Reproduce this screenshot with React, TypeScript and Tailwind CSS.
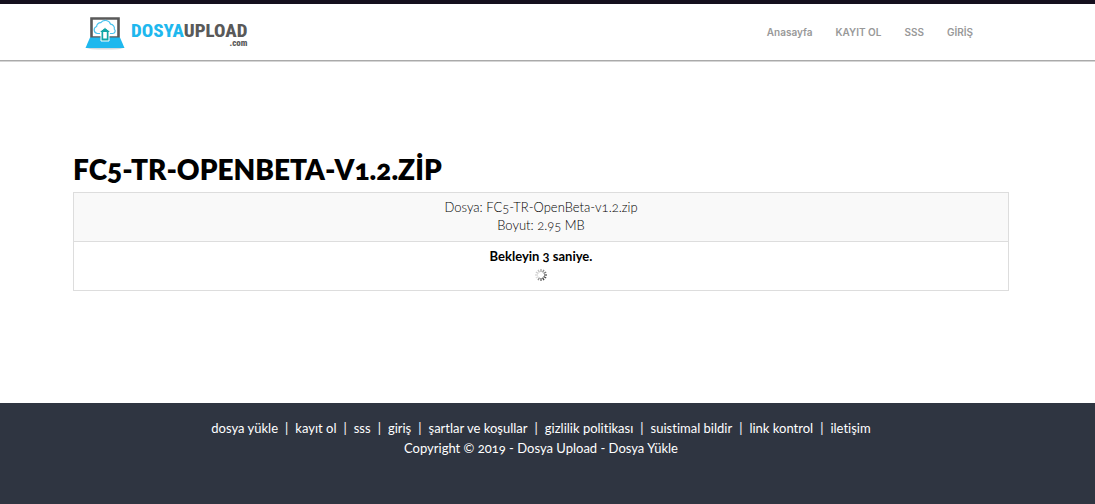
const navLinks = ["Anasayfa", "KAYIT OL", "SSS", "GİRİŞ"];

const footerLinks = [
    "dosya yükle",
    "kayıt ol",
    "sss",
    "giriş",
    "şartlar ve koşullar",
    "gizlilik politikası",
    "suistimal bildir",
    "link kontrol",
    "iletişim",
];

// from the 12 o'clock bar, clockwise
const spinnerShades = ["#a5a5a5", "#909090", "#757575", "#555555", "#444444", "#444444", "#666666", "#909090", "#dddddd", "#d5d5d5", "#cccccc", "#c0c0c0"];

function Logo() {
    return (
        <a href="#" aria-label="DosyaUpload.com" className="flex items-start gap-[6px]">
            <svg width="40" height="34" viewBox="0 0 40 34" aria-hidden="true">
                <ellipse cx="20" cy="32" rx="18" ry="1.6" fill="#d5dadd" />
                <path d="M6.5 2.5h27v19h-27z" fill="#fff" stroke="#595959" strokeWidth="2.6" />
                <path d="M5 21.5h30L39.500 32H0.5z" fill="#1fb8ee" />
                <path
                    d="M15 17.500h-2.500a3.600 3.600 0 0 1-.9-7 4 4 0 0 1 4.200-3.800 5.600 5.600 0 0 1 9.800 1.500 4 4 0 0 1 3.700 4.900 2.500 2.500 0 0 1-1.500 4.400H25"
                    fill="#fff"
                    stroke="#4cc4ee"
                    strokeWidth="1.2"
                />
                <path d="M20 11.500l6 4.500h-2v9h-8v-9h-2z" fill="#10a5a5" stroke="#fff" strokeWidth="1" />
                <path d="M18.200 16h3.600v6.500h-3.600z" fill="#fff" />
            </svg>
            <span className="flex flex-col items-end pt-[6px] font-['Roboto_Condensed','Open_Sans_Condensed',Roboto,sans-serif] font-extrabold text-[#595959]">
                <span className="text-[19px] leading-[18px]">
                    <span className="text-[#1fb8ee]">DOSYA</span>UPLOAD
                </span>
                <span className="text-[9px] leading-[6px]">.com</span>
            </span>
        </a>
    );
}

function Spinner() {
    return (
        <svg width="14" height="14" viewBox="-7 -7 14 14" role="img" aria-label="Yükleniyor">
            {spinnerShades.map((shade, i) => (
                <path key={i} d="M0 -3V-6" stroke={shade} strokeWidth="1.3" transform={`rotate(${i * 30})`} />
            ))}
        </svg>
    );
}

export default function App() {
    return (
        <div lang="tr" className="flex min-h-screen flex-col bg-white font-[Lato,sans-serif] text-[13px] text-black oldstyle-nums [font-variant-ligatures:none]">
            <header className="flex h-[61px] items-start justify-between border-t-4 border-b border-t-[#150f1d] border-b-[#aaa] pt-3 pr-[122px] pl-[85px] shadow-[0_1px_0_#d5d5d5]">
                <Logo />
                <nav className="flex gap-[23px] pt-[7px] font-[Inter,sans-serif] text-[10px] leading-[18px] font-semibold text-[#999]">
                    {navLinks.map((label) => (
                        <a key={label} href="#">{label}</a>
                    ))}
                </nav>
            </header>

            <main className="pt-[90px] pr-[86px] pb-28 pl-[73px]">
                <h1 className="mb-[5px] text-[28px] leading-9 font-extrabold">FC5-TR-OPENBETA-V1.2.ZİP</h1>
                <table className="w-full border-collapse text-center leading-[18px]">
                    <tbody>
                        <tr>
                            <td className="border border-[#ddd] bg-[#f9f9f9] pt-[5px] pb-[7px] font-light text-black">
                                Dosya: FC5-TR-OpenBeta-v1.2.zip
                                <br />
                                Boyut: 2.95 MB
                            </td>
                        </tr>
                        <tr>
                            <td className="border border-[#ddd] pt-[5px] pb-[7px]">
                                <strong>Bekleyin 3 saniye.</strong>
                                <div className="flex h-5 items-center justify-center -mb-[2px]">
                                    <Spinner />
                                </div>
                            </td>
                        </tr>
                    </tbody>
                </table>
            </main>

            <footer className="flex-1 bg-[#2f3541] pt-[15px] pr-[86px] pb-11 pl-[73px] text-center leading-5 text-white">
                <ul className="flex flex-wrap justify-center">
                    {footerLinks.map((label, i) => (
                        <li key={label}>
                            {i > 0 && <span className="px-[7px]">|</span>}
                            <a href="#">{label}</a>
                        </li>
                    ))}
                </ul>
                <p>Copyright © 2019 - Dosya Upload - Dosya Yükle</p>
            </footer>
        </div>
    );
}
